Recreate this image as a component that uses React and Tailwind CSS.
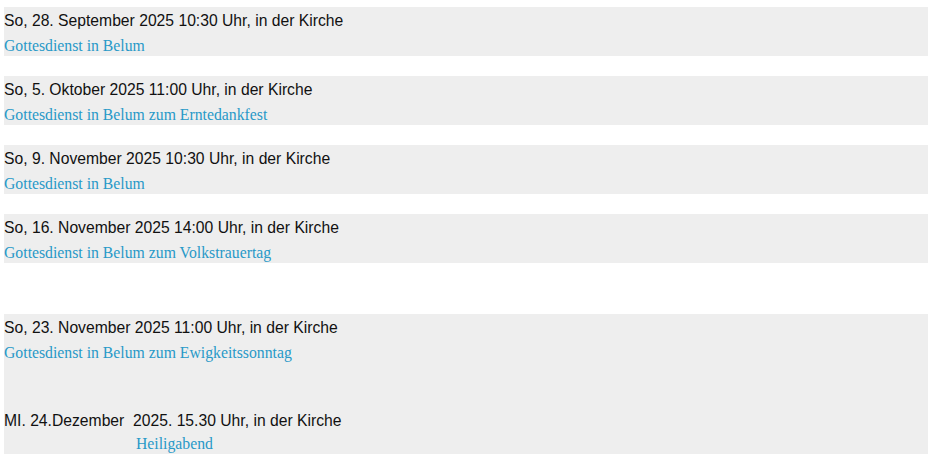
export default function App() {
  const items = [
    { date: "So, 28. September 2025 10:30 Uhr, in der Kirche", title: "Gottesdienst in Belum" },
    { date: "So, 5. Oktober 2025 11:00 Uhr, in der Kirche", title: "Gottesdienst in Belum zum Erntedankfest" },
    { date: "So, 9. November 2025 10:30 Uhr, in der Kirche", title: "Gottesdienst in Belum" },
    { date: "So, 16. November 2025 14:00 Uhr, in der Kirche", title: "Gottesdienst in Belum zum Volkstrauertag" },
  ];
  const sans = "font-['Liberation_Sans',Arial,sans-serif] text-[15.7px] leading-[26px] text-[#111111]";
  const serif = "font-['Liberation_Serif','Times_New_Roman',serif] text-[15.75px] leading-[23px] text-[#2899c8]";
  return (
    <div className="bg-white w-[940px] h-[468px] pt-[7px] pl-[4px]">
      <div className="flex flex-col w-[924px] gap-[20px]">
        {items.map((it, i) => (
          <div key={i} className="bg-[#eeeeee] h-[49px] pt-[1px]">
            <div className={sans}>{it.date}</div>
            <div className={serif}>{it.title}</div>
          </div>
        ))}
      </div>
      <div className="mt-[51px] w-[924px] bg-[#eeeeee] h-[140px] pt-[1px]">
        <div className={sans}>So, 23. November 2025 11:00 Uhr, in der Kirche</div>
        <div className={serif}>Gottesdienst in Belum zum Ewigkeitssonntag</div>
        <div className="h-[44px]"></div>
        <div className={sans + " whitespace-pre"}>MI. 24.Dezember  2025. 15.30 Uhr, in der Kirche</div>
        <div className={serif + " pl-[132px] leading-[17px] -mt-[2px]"}>Heiligabend</div>
      </div>
    </div>
  );
}
